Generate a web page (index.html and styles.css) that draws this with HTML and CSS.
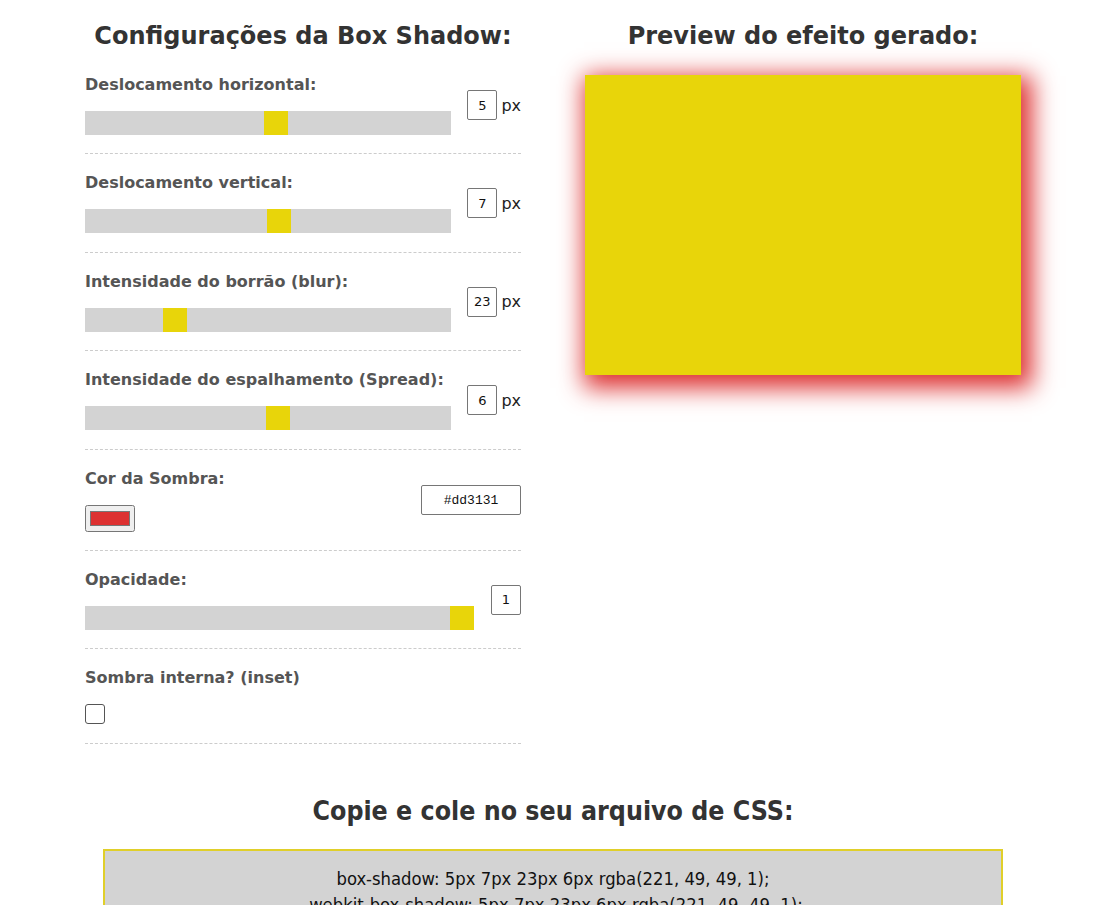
FILE: index.html
```html
<!DOCTYPE html>
<html lang="pt-BR">
<head>
<meta charset="utf-8">
<title>Gerador de Box Shadow</title>
<link rel="stylesheet" href="styles.css">
</head>
<body>
<main class="page">
  <div class="columns">
    <section class="settings">
      <h2 class="title">Configurações da Box Shadow:</h2>

      <div class="field">
        <div class="field-main">
          <label class="label">Deslocamento horizontal:</label>
          <div class="track"><span class="thumb" style="left:179px"></span></div>
        </div>
        <div class="field-side">
          <input class="num" type="text" value="5"><span class="unit">px</span>
        </div>
      </div>

      <div class="field">
        <div class="field-main">
          <label class="label">Deslocamento vertical:</label>
          <div class="track"><span class="thumb" style="left:182px"></span></div>
        </div>
        <div class="field-side">
          <input class="num" type="text" value="7"><span class="unit">px</span>
        </div>
      </div>

      <div class="field">
        <div class="field-main">
          <label class="label">Intensidade do borrão (blur):</label>
          <div class="track"><span class="thumb" style="left:78px"></span></div>
        </div>
        <div class="field-side">
          <input class="num" type="text" value="23"><span class="unit">px</span>
        </div>
      </div>

      <div class="field">
        <div class="field-main">
          <label class="label">Intensidade do espalhamento (Spread):</label>
          <div class="track"><span class="thumb" style="left:181px"></span></div>
        </div>
        <div class="field-side">
          <input class="num" type="text" value="6"><span class="unit">px</span>
        </div>
      </div>

      <div class="field">
        <div class="field-main">
          <label class="label">Cor da Sombra:</label>
          <input class="color" type="color" value="#dd3131">
        </div>
        <div class="field-side">
          <input class="hex" type="text" value="#dd3131">
        </div>
      </div>

      <div class="field">
        <div class="field-main">
          <label class="label">Opacidade:</label>
          <div class="track"><span class="thumb" style="left:365px"></span></div>
        </div>
        <div class="field-side">
          <input class="num" type="text" value="1">
        </div>
      </div>

      <div class="field">
        <div class="field-main">
          <label class="label">Sombra interna? (inset)</label>
          <input class="check" type="checkbox">
        </div>
      </div>
    </section>

    <section class="preview">
      <h2 class="title">Preview do efeito gerado:</h2>
      <div class="box"></div>
    </section>
  </div>

  <section class="output">
    <h2 class="title-alt">Copie e cole no seu arquivo de CSS:</h2>
    <div class="code">
      <p>box-shadow: 5px 7px 23px 6px rgba(221, 49, 49, 1);</p>
      <p>-webkit-box-shadow: 5px 7px 23px 6px rgba(221, 49, 49, 1);</p>
      <p>-moz-box-shadow: 5px 7px 23px 6px rgba(221, 49, 49, 1);</p>
    </div>
  </section>
</main>
</body>
</html>
```

FILE: styles.css
```css
* { box-sizing: border-box; }

html, body { margin: 0; padding: 0; background: #fff; }

body {
  padding-left: 12px;
  font-family: "DejaVu Sans", Verdana, sans-serif;
  color: #333;
}

.page {
  width: 936px;
  margin: 0 auto;
  padding-top: 22px;
}

.columns {
  display: flex;
  gap: 64px;
  align-items: flex-start;
}

.settings, .preview { width: 436px; }

.title {
  margin: 0 0 6px;
  font-size: 24px;
  line-height: 28px;
  font-weight: bold;
  text-align: center;
  color: #333;
}

.field {
  display: flex;
  align-items: center;
  padding: 19px 0 18.4px;
  border-bottom: 1px dashed #ccc;
}

.field-main {
  display: flex;
  flex-direction: column;
  align-items: flex-start;
  gap: 16px;
}

.field-side {
  margin-left: auto;
  display: flex;
  align-items: center;
}

.label {
  font-size: 16px;
  line-height: 20px;
  font-weight: bold;
  color: #555;
}

.track {
  position: relative;
  width: 366px;
  height: 24px;
  background: #d3d3d3;
}

.thumb {
  position: absolute;
  top: 0;
  width: 24px;
  height: 24px;
  background: #e8d50a;
}

.num {
  width: 30px;
  height: 30px;
  margin: 0;
  padding: 0;
  border: 1px solid #767676;
  border-radius: 2px;
  font-family: "DejaVu Sans", Verdana, sans-serif;
  font-size: 13px;
  text-align: center;
  color: #111;
}

.unit {
  margin-left: 4px;
  font-size: 16px;
  color: #222;
}

.hex {
  width: 100px;
  height: 30px;
  margin: 0;
  padding: 0;
  border: 1px solid #767676;
  border-radius: 2px;
  font-family: "Liberation Mono", monospace;
  font-size: 13px;
  text-align: center;
  color: #111;
}

.color {
  width: 50px;
  height: 27px;
  margin: 0;
}

.check {
  appearance: none;
  -webkit-appearance: none;
  width: 20px;
  height: 20px;
  margin: 0;
  border: 1px solid #555;
  border-radius: 3px;
  background: #fff;
}

.preview .title { margin-bottom: 25px; }

.box {
  width: 436px;
  height: 300px;
  background: #e8d50a;
  box-shadow: 5px 7px 23px 6px rgba(221, 49, 49, 1);
}

.output {
  margin-top: 51px;
  display: flex;
  flex-direction: column;
  align-items: center;
}

.title-alt {
  margin: 0 0 23px;
  font-family: "DejaVu Sans Condensed", "DejaVu Sans", sans-serif;
  font-stretch: condensed;
  font-size: 26.5px;
  line-height: 31px;
  font-weight: bold;
  color: #333;
}

.code {
  width: 900px;
  padding: 15px 20px;
  background: #d3d3d3;
  border: 2px solid #e0cf2a;
  text-align: center;
  font-family: "DejaVu Sans Condensed", "DejaVu Sans", sans-serif;
  font-stretch: condensed;
  font-size: 18.3px;
  line-height: 26px;
  color: #111;
}

.code p { margin: 0; }
```
